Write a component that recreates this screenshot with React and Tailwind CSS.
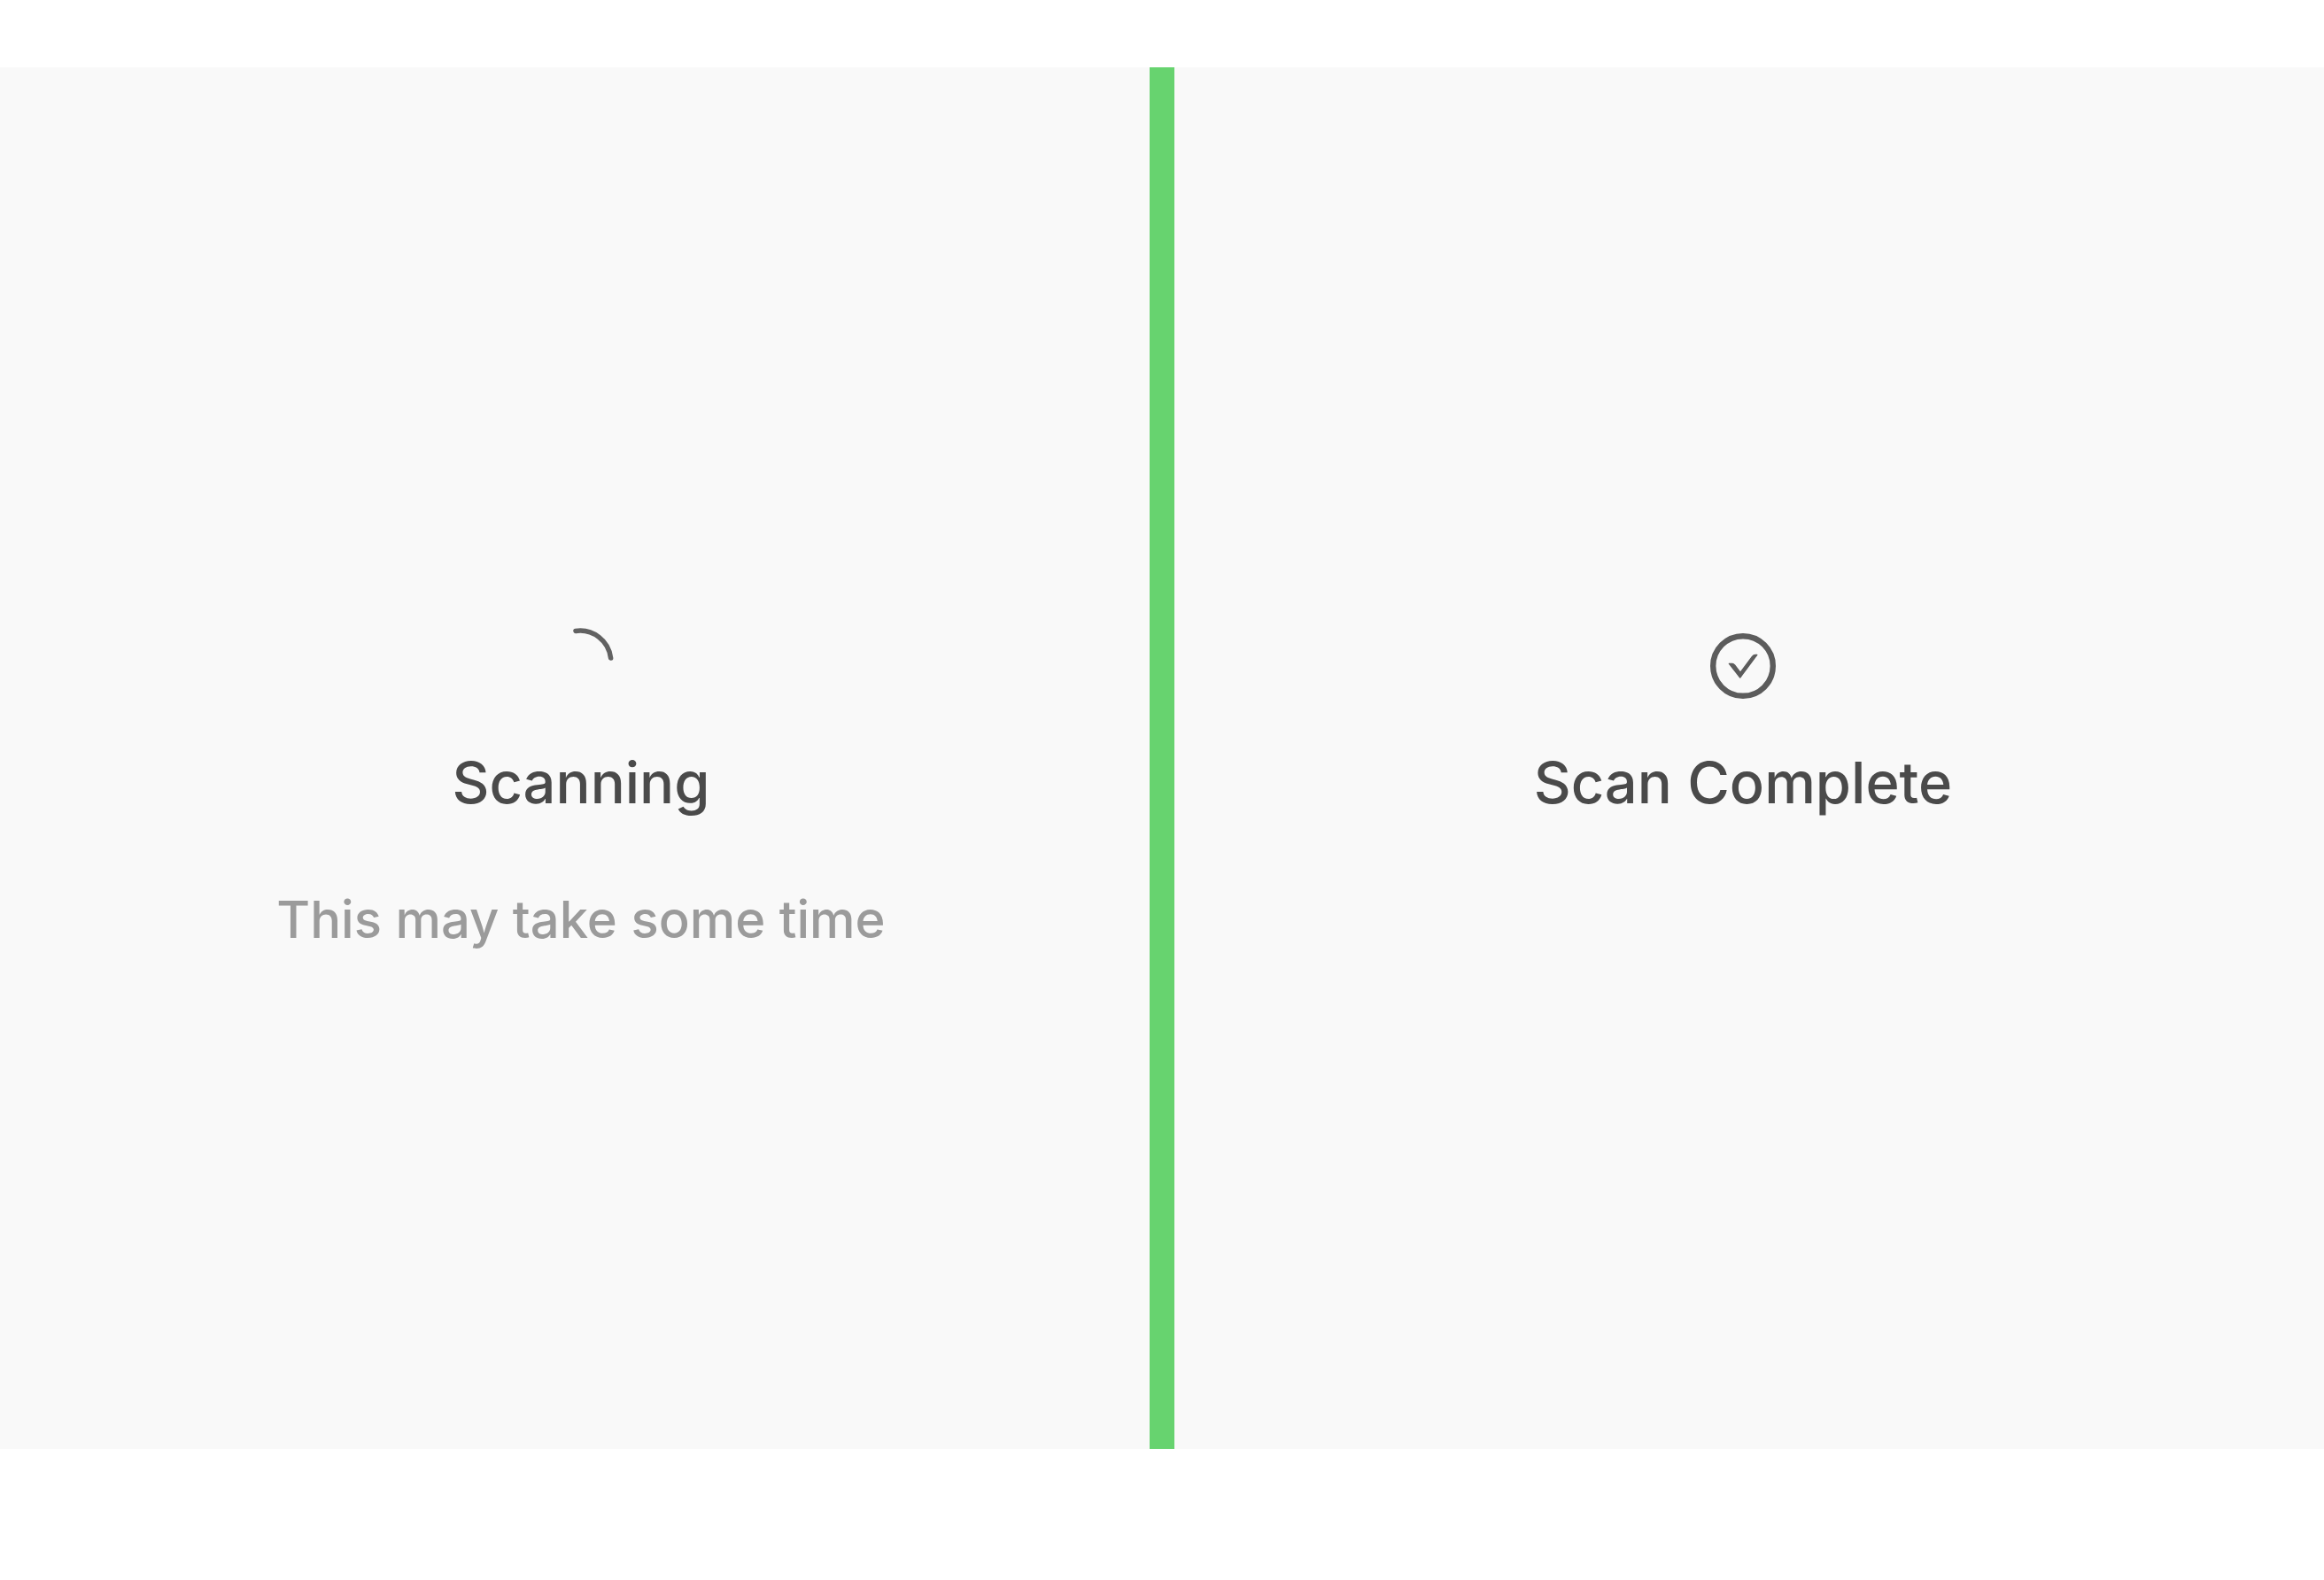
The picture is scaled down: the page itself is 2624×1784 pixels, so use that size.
function SpinnerArc() {
  return (
    <svg className="size-20 overflow-visible" viewBox="0 0 80 80" fill="none" aria-hidden="true">
      <path d="M34 0.4 A35 35 0 0 1 73.6 31" stroke="#626262" strokeWidth="5.6" strokeLinecap="round" />
    </svg>
  );
}

function CheckCircle() {
  return (
    <svg className="size-20" viewBox="0 0 80 80" fill="none" stroke="#5c5c5c" aria-hidden="true">
      <circle cx="40" cy="40" r="33.8" strokeWidth="6.4" />
      <path
        d="M24.4 37.4 H28 Q29.4 37.4 30.4 38.8 L37 47.4 L50.4 29.4 Q52 27.4 54 27.4 H55.8 L36.7 53 Z"
        fill="#5c5c5c"
        strokeWidth="1.4"
        strokeLinejoin="round"
      />
    </svg>
  );
}

function StatusPanel({ icon, title, note }) {
  return (
    <section className="flex min-w-0 flex-1 flex-col items-center bg-[#f9f9f9] px-8 pt-[636px] text-center">
      {icon}
      <h2 className="mt-12 text-[65px] leading-[88px] font-medium text-[#4a4a4a]">{title}</h2>
      {note && <p className="mt-[74px] text-[58px] leading-[72px] font-medium text-[#9b9b9b]">{note}</p>}
    </section>
  );
}

export default function App() {
  return (
    <main className="flex min-h-screen flex-col bg-white pt-19 pb-37 font-['Inter',sans-serif]">
      <div className="flex flex-1">
        <StatusPanel icon={<SpinnerArc />} title="Scanning" note="This may take some time" />
        <div className="z-10 -mx-3.5 w-7 shrink-0 bg-[#67d36f]" />
        <StatusPanel icon={<CheckCircle />} title="Scan Complete" />
      </div>
    </main>
  );
}
